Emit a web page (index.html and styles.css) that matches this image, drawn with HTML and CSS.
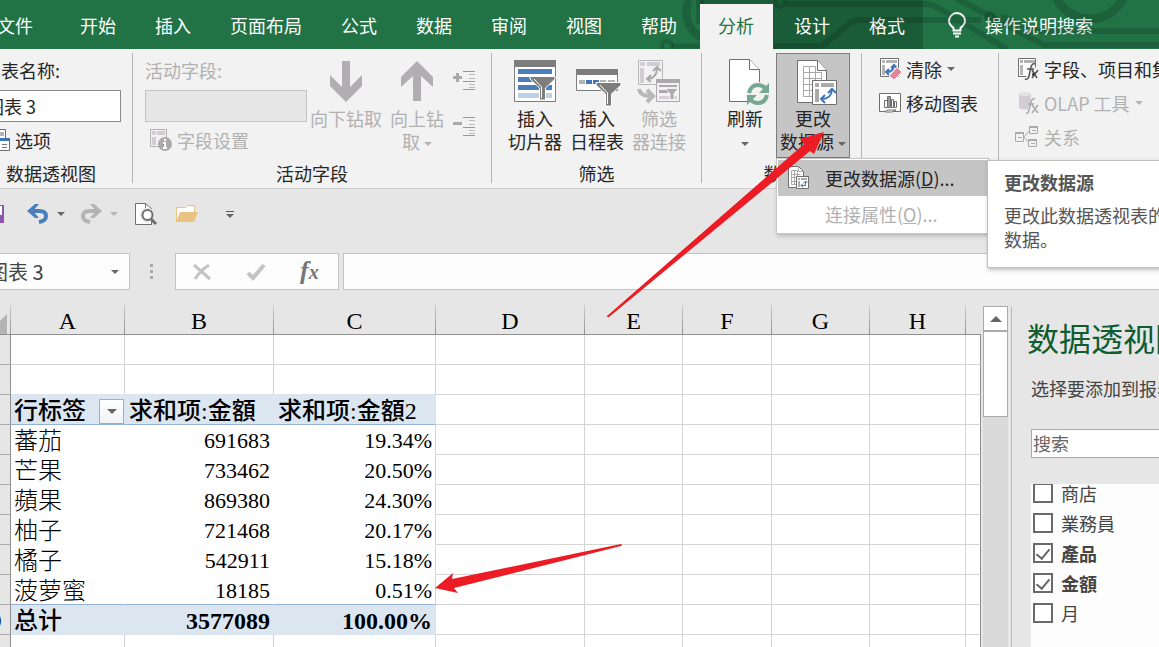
FILE: index.html
```html
<!DOCTYPE html>
<html lang="zh-CN">
<head>
<meta charset="utf-8">
<title>数据透视图</title>
<link rel="stylesheet" href="styles.css">
</head>
<body>
<div class="app">
  <header class="tabbar">
    <nav class="tabs">
      <button class="tab tab-file">文件</button>
      <button class="tab">开始</button>
      <button class="tab">插入</button>
      <button class="tab">页面布局</button>
      <button class="tab">公式</button>
      <button class="tab">数据</button>
      <button class="tab">审阅</button>
      <button class="tab">视图</button>
      <button class="tab">帮助</button>
      <div class="tabs-context">
        <button class="tab tab-active">分析</button>
        <button class="tab">设计</button>
        <button class="tab">格式</button>
      </div>
      <button class="tell-me">
        <svg width="20" height="26" viewBox="0 0 20 26" fill="none" stroke="#fff" stroke-width="2"><path d="M6.500 18.500V16C3.500 13.500 2 11.500 2 9a8 8 0 0 1 16 0c0 2.500-1.500 4.500-4.500 7v2.500zM6 21.500h8M8 24.500h4"/></svg>
        操作说明搜索
      </button>
    </nav>
    <svg class="circuit" width="519" height="49" viewBox="640 0 519 49" fill="none" stroke="#000" stroke-opacity=".15">
      <path stroke-width="8" d="M689 0C683 12 687 30 701 37"/>
      <path stroke-width="8" d="M700 0v24"/>
      <circle cx="667" cy="46" r="5" stroke-width="4"/><path stroke-width="5" d="M672 46h29"/>
      <circle cx="780" cy="2" r="5" stroke-width="4"/>
      <path stroke-width="6" d="M786 4h138q8 0 16 5l67 40M774 46h44q4 0 8-3l24-20q4-3 9-3h122"/>
      <circle cx="990" cy="17" r="4" stroke-width="4"/>
      <path stroke-width="6" d="M956-2l88 47h115M1001 17q14 2 28 14h130"/>
      <circle cx="1090" cy="-18" r="37" stroke-width="9"/>
    </svg>
  </header>

  <section class="ribbon">
    <div class="group group-name">
      <div class="group-body stack">
        <label for="chart-name" class="field-label">图表名称:</label>
        <input id="chart-name" class="text-box" value="图表 3">
        <button class="row-btn">
          <svg width="22" height="24" viewBox="0 0 22 24"><path fill="#fff" stroke="#6d6d6d" d="M2.500 1.500h15v16h-15z"/><path fill="#b5b5b5" d="M4 4h12v4H4z"/><path fill="#fff" stroke="#6d6d6d" d="M6.500 10.500h15v12h-15z"/><path fill="#3f76b5" d="M6 10h16v3H6z"/><path stroke="#777" d="M9 16.500h3m2 0h5M9 19.500h3m2 0h5"/></svg>
          选项
        </button>
      </div>
      <div class="group-label">数据透视图</div>
    </div>

    <div class="group group-field">
      <div class="group-body">
        <div class="stack">
          <label for="active-field" class="field-label off">活动字段:</label>
          <input id="active-field" class="text-box" disabled>
          <button class="row-btn indent off" disabled>
            <svg width="22" height="24" viewBox="0 0 22 24"><path fill="#f4f1f4" stroke="#b1b1b1" d="M.5 1.500h16v17H.5z"/><path fill="#d3cdd3" d="M2 3h4v4H2zM7 3h8v4H7zM2 9h4v8H2z"/><circle cx="15" cy="16" r="7" fill="#aaa"/><path stroke="#fff" stroke-width="2" d="M15 11v2m-2 2h2v5m-2 0h4"/></svg>
            字段设置
          </button>
        </div>
        <button class="big-btn off drill" disabled>
          <svg width="34" height="52" viewBox="0 0 34 52"><path fill="#b0aeb0" d="M13 4h8v26l12-12v11L17 45 1 29V18l12 12z"/></svg>
          <span>向下钻取</span>
        </button>
        <button class="big-btn off drill-up" disabled>
          <svg width="34" height="52" viewBox="0 0 34 52"><path fill="#b0aeb0" d="M13 44h8V19l12 11V20L17 4 1 20v10l12-11z"/></svg>
          <span>向上钻<br>取 <i class="caret"></i></span>
        </button>
        <div class="expand">
          <svg width="24" height="24" viewBox="0 0 24 24"><path fill="none" stroke="#aaa" stroke-width="3" d="M1 8.500h9M5.500 4v9"/><path stroke="#999" d="M11 2.500h12M11 12.500h12M11 20.500h12"/><path stroke="#bbb" d="M17 5.500h6M17 9.500h6M17 15.500h6M17 18.500h6"/></svg>
          <svg width="24" height="24" viewBox="0 0 24 24"><path fill="none" stroke="#aaa" stroke-width="3" d="M1 8.500h9"/><path stroke="#999" d="M11 2.500h12M11 12.500h12M11 20.500h12"/><path stroke="#bbb" d="M17 5.500h6M17 9.500h6M17 15.500h6M17 18.500h6"/></svg>
        </div>
      </div>
      <div class="group-label">活动字段</div>
    </div>

    <div class="group group-filter">
      <div class="group-body">
        <button class="big-btn">
          <svg width="46" height="52" viewBox="0 0 46 52"><path fill="#fff" stroke="#7d7d7d" d="M2.500 3.500h41v41h-41z"/><path fill="#7d7d7d" d="M2 3h42v7H2z"/><path fill="#4a7fbc" d="M6 12h34v5H6zM6 20h34v5H6zM6 28h34v5H6z"/><path fill="#bcd1e8" d="M6 36h34v5H6z"/><path fill="#7d7d7d" stroke="#fff" d="M18 19.500h25v2.500l-9.500 9v12h-6V31L18 22z"/><path stroke="#fff" d="M22 22l7.500 8v11" fill="none"/></svg>
          <span>插入<br>切片器</span>
        </button>
        <button class="big-btn">
          <svg width="46" height="52" viewBox="0 0 46 52"><path fill="#fff" stroke="#7d7d7d" d="M2.500 12.500h41v21h-41z"/><path fill="#7d7d7d" d="M2 12h42v6H2z"/><path fill="#b3b3b3" d="M5 23h6v4H5zM26 23h6v4h-6zM34 23h7v4h-7z"/><path fill="#3f76b5" d="M12 23h6v4h-6zM19 23h6v4h-6z"/><path fill="#7d7d7d" stroke="#fff" d="M22 25.500h25v2.500l-9.500 9v12h-6V37L22 28z"/><path stroke="#fff" d="M26 28l7.500 8v11" fill="none"/></svg>
          <span>插入<br>日程表</span>
        </button>
        <button class="big-btn off" disabled>
          <svg width="46" height="52" viewBox="0 0 46 52"><path fill="#f4f1f4" stroke="#b8b8b8" d="M2.500 3.500h24v24h-24z"/><path fill="#d3cdd3" d="M4 5h5v4H4zM11 5h13v4H11zM4 11h4v15H4z"/><path fill="none" stroke="#aaa" stroke-width="2" d="M12 22q9-1 9-11M15 18l-4 4 4 3M17 14l4-4 4 4"/><path fill="none" stroke="#b8b8b8" stroke-width="4" d="M3 32q1 7 12 7M11 33l6 6-6 6"/><path fill="#f4f1f4" stroke="#aaa" d="M20.500 22.500h23v22h-23z"/><path fill="#aaa" d="M20 22h24v4H20z"/><path fill="#aaa" d="M23 28h18v2H23zM23 33h9v3h-9z"/><path fill="#d9d0d9" d="M23 39h18v3H23z"/><path fill="#aaa" stroke="#f4f1f4" d="M29 31.500h13l-4 5v6h-4v-6z"/></svg>
          <span>筛选<br>器连接</span>
        </button>
      </div>
      <div class="group-label">筛选</div>
    </div>

    <div class="group group-data">
      <div class="group-body">
        <button class="big-btn">
          <svg width="52" height="52" viewBox="-8 0 52 52"><path fill="#fff" stroke="#6f6f6f" d="M2.500 2.500h20l10 10v32h-30z"/><path fill="#fff" stroke="#6f6f6f" d="M22.500 2.500v10h10"/><circle cx="31" cy="37" r="12" fill="#f2f2f2"/><path fill="none" stroke="#75a893" stroke-width="4" d="M22 36q2-8 9-8 5 0 8 4M40 38q-2 8-9 8-5 0-8-4"/><path fill="#75a893" d="M42 26v10H32zM20 48V38h10z"/></svg>
          <span>刷新<br><i class="caret"></i></span>
        </button>
        <div class="dropdown">
          <button class="big-btn pressed">
            <svg width="48" height="52" viewBox="0 0 48 52"><path fill="#fff" stroke="#6f6f6f" d="M8.500 3.500h20l9 10v32h-29z"/><path fill="#fff" stroke="#6f6f6f" d="M28.500 3.500v10h9"/><path fill="none" stroke="#aaa" d="M14.500 9.500h12v30h-12zM14.500 15.500h18v18h-18M14.500 21.500h18M14.500 27.500h18M20.500 9.500v30M26.500 15v25M32.500 15v18"/><path fill="#fff" stroke="#6f6f6f" d="M23.500 23.500h24v24h-24z"/><path fill="#aaa" d="M26 26h4v4h-4zM32 26h13v4H32zM26 32h4v13h-4z"/><path fill="none" stroke="#3f76b5" stroke-width="2" d="M33 42q9 0 10-9M36 38l-4 4 4 4M39 36l4-4 4 4"/></svg>
            <span>更改<br>数据源 <i class="caret"></i></span>
          </button>
          <div class="menu">
            <button class="menu-item current">
              <svg width="22" height="24" viewBox="0 0 22 24"><path fill="#fff" stroke="#6f6f6f" d="M.5.5h10l5 5v16H.5z"/><path fill="none" stroke="#aaa" d="M3.500 4.500h6v14h-6zM3.500 8.500h9M3.500 11.500h9M3.500 15.500h6M6.500 4v14M10.500.5v5h5"/><path fill="#fff" stroke="#6f6f6f" d="M8.500 10.500h12v12h-12z"/><path fill="#aaa" d="M10 12h2v2h-2zM13 12h6v2h-6zM10 15h2v6h-2z"/><path fill="none" stroke="#3f76b5" d="M13 19.500h4.500V15M15 17.500l-2 2 2 2M15.500 17l2-2 2 2"/></svg>
              <span>更改数据源(<u>D</u>)...</span>
            </button>
            <button class="menu-item off" disabled><span>连接属性(<u>O</u>)...</span></button>
          </div>
          <div class="tooltip" role="tooltip">
            <strong>更改数据源</strong>
            <p>更改此数据透视表的源<br>数据。</p>
          </div>
        </div>
      </div>
      <div class="group-label">数据</div>
    </div>

    <div class="group group-actions">
      <div class="group-body rows">
        <button class="row-btn">
          <svg width="22" height="24" viewBox="0 0 22 24"><path fill="#fff" stroke="#6f6f6f" d="M1.500 1.500h18v18h-18z"/><path fill="#b3b3b3" d="M3 3h3v3H3zM7 3h11v3H7zM3 8h3v10H3z"/><path fill="none" stroke="#3f76b5" stroke-width="2" d="M8 15q6 0 7-6M10 12l-3 3 3 3M12 11l3-3 3 3"/><path fill="#e6849a" stroke="#fff" d="M18 10l5 5-8 8-5-4z"/></svg>
          清除 <i class="caret"></i>
        </button>
        <button class="row-btn">
          <svg width="22" height="24" viewBox="0 0 22 24"><path fill="#fff" stroke="#6f6f6f" d="M.5 2.500h21v18H.5z"/><path fill="#fff" stroke="#6f6f6f" d="M5.500 9.500h3v7h-3zM12.500 8.500h2v8h-2zM15.500 10.500h2v6h-2z"/><path fill="#999" stroke="#6f6f6f" d="M8.500 5.500h3v11h-3z"/><path fill="#fff" stroke="#6f6f6f" d="M6 21q1-2 3-2h8l-4 2z"/></svg>
          移动图表
        </button>
      </div>
      <div class="group-label"></div>
    </div>

    <div class="group group-calc">
      <div class="group-body rows">
        <button class="row-btn">
          <svg width="22" height="24" viewBox="0 0 22 24"><path fill="#fff" stroke="#6f6f6f" d="M1.500 1.500h17v18h-17z"/><path fill="#b3b3b3" d="M3 3h3v3H3zM7 3h11v3H7zM3 8h3v10H3z"/><path stroke="#f2f2f2" stroke-width="5" d="M11 22l5-14M13 13h8v8h-8"/><path fill="none" stroke="#555" stroke-width="1.500" d="M18 7q-3-1-4 3l-2 9q-1 4-4 3M10 12h7M15 13l5 8M21 13l-6 8"/></svg>
          字段、项目和集
        </button>
        <button class="row-btn off" disabled>
          <svg width="22" height="24" viewBox="0 0 22 24"><path fill="#d3cdd3" d="M2 3q5-4 12 0v14q-6 3-12 0z"/><ellipse cx="8" cy="3" rx="6" ry="2" fill="#e6e1e6"/><path fill="none" stroke="#f2f2f2" stroke-width="5" d="M17 8l-5 14"/><path fill="none" stroke="#aaa" stroke-width="1.500" d="M18 8q-3-1-4 3l-2 8q-1 4-3 3M11 13h6M15 14l6 8M21 14l-6 8"/></svg>
          OLAP 工具 <i class="caret"></i>
        </button>
        <button class="row-btn off" disabled>
          <svg class="wide" width="24" height="24" viewBox="0 0 24 24"><path fill="none" stroke="#aaa" d="M9 12l6-7M9 12l5 6M.5 8.500h8v8h-8zM14.500 1.500h8v7h-8zM13.500 14.500h8v7h-8zM3 12.500h4M17 5.500h4M16 18.500h4"/><path stroke="#aaa" stroke-width="2" d="M0 8h9M14 2h9M13 15h9"/></svg>
          关系
        </button>
      </div>
      <div class="group-label"></div>
    </div>
  </section>

  <div class="quick">
    <button aria-label="保存"><svg width="20" height="24" viewBox="0 0 20 24"><path fill="#8b55b0" d="M1 3h19v18H1z"/><path fill="#fff" d="M4 4h14v9H4z"/></svg></button>
    <button class="q-undo" aria-label="撤消"><svg width="22" height="24" viewBox="0 0 22 24"><path fill="none" stroke="#4a7fbc" stroke-width="4" d="M3 9h9q7 0 7 5t-7 6"/><path fill="#4a7fbc" d="M0 9l8-7h4L6 9l6 7H8z"/></svg></button>
    <i class="caret"></i>
    <button class="q-redo" aria-label="恢复"><svg width="22" height="24" viewBox="0 0 22 24"><path fill="none" stroke="#b3b3b3" stroke-width="4" d="M19 9h-9q-7 0-7 5t7 6"/><path fill="#b3b3b3" d="M22 9l-8-7h-4l6 7-6 7h4z"/></svg></button>
    <i class="caret pale"></i>
    <button class="q-preview" aria-label="打印预览"><svg width="22" height="24" viewBox="0 0 22 24"><path fill="#fff" stroke="#6f6f6f" d="M.5 1.500h10l6 5v16H.5z"/><path fill="none" stroke="#6f6f6f" d="M10.500 1.500v5h6"/><circle cx="12.500" cy="13" r="5" fill="#fff" stroke="#e6e6e6" stroke-width="5"/><circle cx="12.500" cy="13" r="5" fill="#fff" stroke="#6f6f6f" stroke-width="2"/><path stroke="#6f6f6f" stroke-width="3" d="M16 17l5 5"/></svg></button>
    <button class="q-open" aria-label="打开"><svg width="22" height="24" viewBox="0 0 22 24"><path fill="#fff" stroke="#e9c284" d="M.5 19V5.500h9l2-2h7V18z"/><path fill="#e9c284" d="M4 10h18l-4 10H0z"/></svg></button>
    <button class="q-more" aria-label="自定义快速访问工具栏"><i class="bar"></i><i class="caret"></i></button>
  </div>

  <div class="formula-row">
    <div class="name-box"><input aria-label="名称框" value="图表 3"><i class="caret"></i></div>
    <svg class="dots" width="3" height="16" viewBox="0 0 3 16" fill="#aaa"><path d="M0 0h3v3H0zM0 6h3v3H0zM0 12h3v3H0z"/></svg>
    <div class="fx-box">
      <button aria-label="取消"><svg width="20" height="20" viewBox="0 0 20 20"><path fill="none" stroke="#c4c4c4" stroke-width="3" d="M2 3l16 14M17 3Q9 8 3 17"/></svg></button>
      <button aria-label="输入"><svg width="20" height="20" viewBox="0 0 20 20"><path fill="none" stroke="#c4c4c4" stroke-width="4" d="M2 11l5 5L18 3"/></svg></button>
      <button class="fx" aria-label="插入函数">f<small>x</small></button>
    </div>
    <input class="formula" aria-label="编辑栏">
  </div>

  <main class="work">
    <div class="sheet">
      <table class="grid">
        <colgroup><col class="c-n"><col class="c-a"><col class="c-b"><col class="c-c"><col class="c-b"><col class="c-e"><col class="c-f"><col class="c-e"><col class="c-h"><col class="c-i"></colgroup>
        <thead><tr><th class="corner"><svg width="20" height="20" viewBox="0 0 20 20"><path fill="#b3b3b3" d="M20 0v20H0z"/></svg></th><th>A</th><th>B</th><th>C</th><th>D</th><th>E</th><th>F</th><th>G</th><th>H</th><th></th></tr></thead>
        <tbody>
          <tr><th>1</th><td></td><td></td><td></td><td></td><td></td><td></td><td></td><td></td><td></td></tr>
          <tr class="before-pivot"><th>2</th><td></td><td></td><td></td><td></td><td></td><td></td><td></td><td></td><td></td></tr>
          <tr class="p-head"><th>3</th><td><div class="with-filter">行标签<button class="filter" aria-label="筛选"><i class="caret"></i></button></div></td><td>求和项:金額</td><td>求和项:金額2</td><td></td><td></td><td></td><td></td><td></td><td></td></tr>
          <tr class="p-row"><th>4</th><td>蕃茄</td><td>691683</td><td>19.34%</td><td></td><td></td><td></td><td></td><td></td><td></td></tr>
          <tr class="p-row"><th>5</th><td>芒果</td><td>733462</td><td>20.50%</td><td></td><td></td><td></td><td></td><td></td><td></td></tr>
          <tr class="p-row"><th>6</th><td>蘋果</td><td>869380</td><td>24.30%</td><td></td><td></td><td></td><td></td><td></td><td></td></tr>
          <tr class="p-row"><th>7</th><td>柚子</td><td>721468</td><td>20.17%</td><td></td><td></td><td></td><td></td><td></td><td></td></tr>
          <tr class="p-row"><th>8</th><td>橘子</td><td>542911</td><td>15.18%</td><td></td><td></td><td></td><td></td><td></td><td></td></tr>
          <tr class="p-row p-last"><th>9</th><td>菠萝蜜</td><td>18185</td><td>0.51%</td><td></td><td></td><td></td><td></td><td></td><td></td></tr>
          <tr class="p-total"><th>10</th><td>总计</td><td>3577089</td><td>100.00%</td><td></td><td></td><td></td><td></td><td></td><td></td></tr>
          <tr><th>11</th><td></td><td></td><td></td><td></td><td></td><td></td><td></td><td></td><td></td></tr>
        </tbody>
      </table>
    </div>
    <div class="scroll">
      <button class="scroll-up" aria-label="向上滚动"><i class="caret up"></i></button>
      <div class="thumb"></div>
    </div>
    <aside class="pane">
      <h2>数据透视图字段</h2>
      <p>选择要添加到报表的字段:</p>
      <input class="search" placeholder="搜索" aria-label="搜索">
      <div class="fields">
        <label><input type="checkbox">商店</label>
        <label><input type="checkbox">業務員</label>
        <label class="on"><input type="checkbox" checked>產品</label>
        <label class="on"><input type="checkbox" checked>金額</label>
        <label><input type="checkbox">月</label>
      </div>
    </aside>
  </main>

  <svg class="arrows" width="1159" height="647" viewBox="0 0 1159 647" fill="#ed1c24"><path d="M824 132l-10 22-4-3-201 166q-2 1-2-1L804 144l-4-5z"/><path d="M435 588l18-15-1 6 169-35q2 1 0 2L454 588l4 5z"/></svg>
</div>
</body>
</html>
```
FILE: styles.css
```css
* { box-sizing: border-box; }
body {
  margin: 0;
  overflow: hidden;
  font: 18px/24px "Noto Sans CJK SC", sans-serif;
  color: #262626;
  background: #e6e6e6;
}
button, input { font: inherit; color: inherit; margin: 0; }
button { border: 0; padding: 0; background: none; white-space: nowrap; }
svg { display: block; flex: none; overflow: visible; }
.app { position: relative; display: flex; flex-direction: column; height: 100vh; overflow: hidden; }

.caret {
  display: inline-block;
  flex: none;
  border: 4px solid transparent;
  border-top-color: #666;
  border-bottom-width: 0;
  vertical-align: middle;
}
.off .caret, .caret.pale { border-top-color: #b5b5b5; }
.caret.up { border-width: 0 6px 6px; border-bottom-color: #666; }
.off { color: #b1b1b1; }

/* tabs */
.tabbar { position: relative; flex: none; background: #217346; color: #fff; }
.tabs { display: flex; gap: 3px; padding-top: 4px; margin-left: -21px; height: 49px; }
.tab { padding: 0 18px 4px; height: 45px; }
.tab-file { margin-right: 8px; }
.tabs-context { display: flex; gap: 3px; margin: -4px 0 0 2px; padding: 4px 0 0; background: #1b5c38; }
.tab-active { position: relative; z-index: 2; padding-right: 19px; background: #f2f2f2; color: #217346; }
.tell-me { display: flex; align-items: center; gap: 18px; margin-left: 21px; height: 45px; padding-bottom: 4px; }
.circuit { position: absolute; left: 640px; top: 0; height: 49px; overflow: hidden; pointer-events: none; }

/* ribbon */
.ribbon { display: flex; flex: none; padding: 4px 0 5px; background: #f2f2f2; border-bottom: 1px solid #cfcfcf; }
.group { display: flex; flex-direction: column; flex: none; border-right: 1px solid #b4b4b4; }
.group-body { display: flex; align-items: flex-start; min-height: 111px; }
.group-label { height: 19px; line-height: 18px; text-align: center; }
.group-name { width: 163px; margin-left: -30px; padding: 0; }
.group-name .stack { padding-left: 13px; }
.group-name .text-box { width: 138px; padding-left: 2px; }
.group-name .row-btn { padding-left: 5px; }
.group-field { width: 359px; }
.group-field .stack { padding-left: 12px; }
.group-filter { width: 210px; }
.group-filter .group-body { padding-left: 16px; gap: 8px; }
.group-data { width: 160px; }
.group-data .group-body { padding-left: 16px; gap: 4px; }
.group-actions { width: 137px; }
.group-actions .group-body { padding-left: 17px; }
.group-calc { flex: 1; overflow: hidden; border: 0; }
.group-calc .group-body { padding-left: 18px; }
.stack { display: flex; flex-direction: column; align-items: flex-start; gap: 6px; padding-top: 5px; }
.field-label { height: 26px; }
.rows { flex-direction: column; }
.rows .row-btn { height: 34px; padding-bottom: 2px; }
.wide { margin-left: -2px; }
.text-box { width: 162px; height: 32px; padding: 0 6px; border: 1px solid #8a8a8a; background: #fff; }
.text-box:disabled { border-color: #c3c3c3; background: #e6e6e6; }
.row-btn { display: flex; align-items: center; gap: 5px; height: 24px; line-height: 22px; }
.row-btn.indent { padding-left: 5px; }
.big-btn { display: flex; flex-direction: column; align-items: center; width: 54px; padding-top: 4px; line-height: 23px; }
.big-btn span { margin-top: -2px; }
.drill { width: 72px; margin-left: 3px; }
.drill-up { margin-left: 8px; }
.expand { display: flex; flex-direction: column; gap: 22px; padding: 16px 0 0 8px; }
.dropdown { position: relative; }
.pressed { width: 74px; height: 105px; padding-top: 3px; border: 1px solid #7d7d7d; background: #c5c5c5; }
.menu {
  position: absolute; z-index: 5; top: 105px; left: 0; width: 213px;
  padding: 1px; border: 1px solid #c6c6c6; background: #fff;
  box-shadow: 1px 2px 4px rgba(0, 0, 0, .2);
}
.menu-item { display: flex; align-items: center; width: 100%; height: 36px; padding-left: 10px; }
.menu-item span { margin-left: 15px; }
.menu-item.off span { margin-left: 37px; }
.current { background: #c5c5c5; }
.tooltip {
  position: absolute; z-index: 6; top: 107px; left: 211px; width: 300px; height: 108px;
  padding: 9px 16px; border: 1px solid #bebebe; background: #fff; color: #555;
  box-shadow: 1px 2px 4px rgba(0, 0, 0, .25);
}
.tooltip p { margin: 9px 0 0; }

/* quick access */
.quick { display: flex; flex: none; align-items: center; height: 50px; margin-left: -16px; }
.q-undo { margin: 0 8px 0 23px; }
.q-redo { margin: 0 8px 0 15px; }
.q-preview { margin-left: 17px; }
.q-open { margin-left: 19px; }
.q-more { display: flex; flex-direction: column; align-items: center; gap: 2px; margin-left: 28px; }
.bar { width: 8px; height: 1px; background: #555; }

/* formula bar */
.formula-row { display: flex; flex: none; align-items: center; height: 37px; margin-top: 14px; }
.name-box, .fx-box, .formula { height: 37px; border: 1px solid #c3c3c3; background: #fdfdfd; }
.name-box { display: flex; align-items: center; width: 145px; margin-left: -15px; padding-right: 10px; font-size: 20px; color: #444; }
.name-box input { flex: 1; min-width: 0; border: 0; padding: 0 0 0 2px; background: none; }
.dots { margin: 0 22px 0 20px; }
.fx-box { display: flex; align-items: center; gap: 34px; width: 164px; padding-left: 16px; }
.fx { font: italic bold 26px/30px "Liberation Serif", serif; color: #777; }
.fx small { font-size: 20px; }
.formula { flex: 1; min-width: 0; margin-left: 4px; border-right: 0; }

/* worksheet */
.work { display: flex; flex: 1; min-height: 0; padding-top: 15px; }
.sheet { flex: none; margin-left: -29px; }
.grid { table-layout: fixed; width: 1010px; border-spacing: 0; background: #fff; color: #000; font: 22px/26px "Liberation Serif", "Noto Sans CJK TC", serif; font-weight: 300; }
.c-n { width: 40px; } .c-a { width: 114px; } .c-b { width: 149px; } .c-c { width: 162px; }
.c-e { width: 98px; } .c-f { width: 89px; } .c-h { width: 96px; } .c-i { width: 15px; }
.grid th, .grid td { height: 30px; padding: 3px 3px 0; border: solid #d4d4d4; border-width: 0 1px 1px 0; white-space: nowrap; }
.grid th { padding: 3px 0 0; font-weight: 400; background: #e6e6e6; border-color: #ababab; }
.grid thead th { font-size: 24px; border-bottom-color: #8f8f8f; border-image: linear-gradient(#d0d0d0, #8f8f8f) 1; }
.grid thead th:last-child { border-right-width: 0; }
.grid tbody th, .grid td:last-child { border-right-color: #8f8f8f; }
.corner svg { margin: 5px 0 0 16px; }
.grid td:nth-child(2) { font-size: 24px; }
.before-pivot td:nth-child(-n+4) { border-bottom-color: #dce6f1; }
.p-head td:nth-child(-n+4) { background: #dce6f1; border-right-color: #dce6f1; border-bottom-color: #95b3d7; font-size: 24px; font-weight: 500; }
.grid .p-head td:nth-child(3), .grid .p-head td:nth-child(4) { padding-left: 4px; }
.p-row td:nth-child(2), .p-row td:nth-child(3) { border-right-color: #fff; }
.p-row td:nth-child(-n+4) { border-bottom-color: #fff; }
.p-row td:nth-child(3), .p-row td:nth-child(4), .p-total td:nth-child(3), .p-total td:nth-child(4) { text-align: right; }
.grid .p-last td:nth-child(-n+4) { border-bottom-color: #95b3d7; }
.p-total td:nth-child(-n+4) { background: #dce6f1; border-color: #dce6f1; font-size: 24px; font-weight: 700; }
.p-total td:nth-child(2) { font-weight: 500; }
.with-filter { display: flex; justify-content: space-between; align-items: center; margin-right: -3px; height: 26px; }
.filter { display: flex; align-items: center; justify-content: center; width: 25px; height: 25px; border: 1px solid #a9aeb5; background: linear-gradient(#fff, #f0f2f5); }
.filter .caret { border-width: 5px 5px 0; border-top-color: #666; }

.scroll { display: flex; flex-direction: column; flex: none; width: 25px; margin: 1px 3px 0 2px; background: #dadada; }
.scroll-up { display: flex; align-items: center; justify-content: center; height: 25px; border: 1px solid #ababab; background: #fff; }
.thumb { height: 86px; border: 1px solid #ababab; background: #fff; }

/* field pane */
.pane { display: flex; flex-direction: column; flex: 1; min-width: 0; margin-top: 2px; padding-left: 19px; border-left: 1px solid #b9b9b9; color: #444; white-space: nowrap; overflow: hidden; }
.pane h2 { margin: 10px 0 0 -4px; font-size: 32px; line-height: 40px; font-weight: 400; color: #0e5c2f; }
.pane p { margin: 19px 0 0; }
.search { flex: none; width: 300px; height: 29px; margin-top: 29px; padding: 0 1px 2px; border: 1px solid #ababab; background: #fff; }
.search::placeholder { color: #666; }
.fields { flex: 1; margin-top: 26px; padding-left: 2px; background: #fdfdfd; overflow: hidden; }
.fields label { display: flex; align-items: center; gap: 8px; height: 30px; }
.fields label:first-child { margin-top: -6px; }
.fields .on { font-weight: 700; }
.fields input { display: flex; flex: none; justify-content: center; appearance: none; width: 20px; height: 20px; border: 2px solid #6a6a6a; background: #fff; }
.fields input:checked::before { content: ""; width: 6px; height: 11px; margin-top: 1px; border: solid #666; border-width: 0 2px 2px 0; transform: rotate(40deg); }

.arrows { position: absolute; z-index: 9; top: 0; left: 0; pointer-events: none; }
```
